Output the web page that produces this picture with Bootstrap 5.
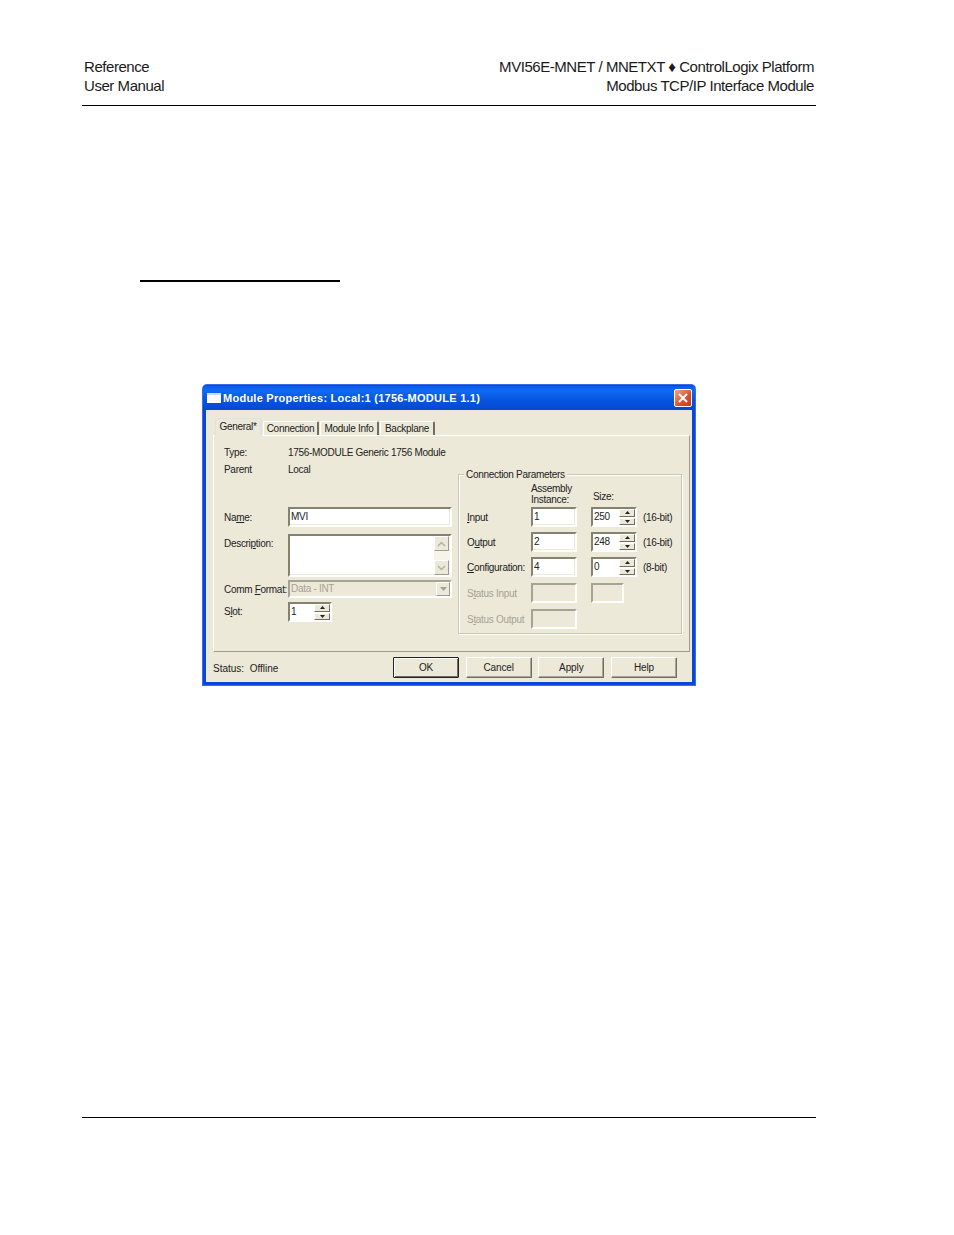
<!DOCTYPE html>
<html lang="en">
<head>
<meta charset="utf-8">
<title>Module Properties</title>
<link href="https://cdn.jsdelivr.net/npm/bootstrap@5.3.0/dist/css/bootstrap.min.css" rel="stylesheet">
<style>
html,body{background:#fff;margin:0}
body{font-family:"Liberation Sans",Arial,sans-serif;color:#222;width:954px;height:1235px;overflow:hidden}
.sheet{padding:57px 138px 0 82px}
.page-head{font-size:15px;letter-spacing:-.45px;line-height:19px;padding:0 2px 10px;border-bottom:1px solid #000;color:#1a1a1a;height:49px}
.short-rule{width:200px;height:2px;background:#000;margin:174px 0 0 58px}
.dlg{width:492px;height:300px;margin:103px 0 0 121px;border:3px solid #0a47d6;border-top-width:1px;border-radius:4px 4px 0 0;background:#ece9d8;font-size:10px;letter-spacing:-.3px;line-height:11px;box-shadow:0 0 0 1px #3a6ee8}
.dlg-title{height:24px;background:linear-gradient(180deg,#0a5ce6 0,#0f6af5 20%,#0656e0 55%,#0548d0 100%);margin:0 -3px;padding:0 3px 0 4px;color:#fff;font-weight:700;font-size:11px;letter-spacing:.26px}
.win-ico{width:14px;height:10px;background:#fff;border-top:2px solid #c9d8f5;margin-right:2px}
.win-close{width:18px;height:18px;background:linear-gradient(135deg,#f0a58c,#d9512c 60%,#c23c18);border:1px solid #fff;border-radius:2px}
.win-close svg{display:block}
.dlg-tabs{margin:8px 0 0 9px;border:0;height:18px;align-items:flex-end;position:relative;z-index:1;flex-wrap:nowrap}
.dlg-tabs .nav-link{font-size:10px;line-height:11px;color:#222;background:#ece9d8;border:0;border-radius:2px 2px 0 0;border-top:1px solid #fff;border-left:1px solid #fff;border-right:2px solid #716f64;padding:1px 0 0;height:14px;text-align:center;margin:0 1px 1px 0}
.dlg-tabs .nav-link.active{height:18px;margin:0 1px 0 0;padding-top:2px;background:#ece9d8;color:#222}
.tab-a{width:47px}.tab-b{width:56px}.tab-c{width:59px}.tab-d{width:55px}
.dlg-panel{margin:-1px 2px 0 7px;height:217px;border:1px solid;border-color:#fff #9d9c8f #9d9c8f #fff;padding:7px 7px 0 10px;gap:6px}
.left-col{width:228px}
.form-line{display:flex;align-items:center}
.lbl{width:64px;flex:none;white-space:nowrap}
.lbl-up{margin-top:-2px}
.h-18{height:18px}.h-17{height:17px}.h-20{height:20px}
.mt-name{margin-top:29px}.mt-desc{margin-top:7px}.mt-comm{margin-top:3px}.mt-slot{margin-top:4px}
.sunk{border:2px solid;border-color:#85836f #fff #fff #85836f;box-shadow:inset -1px -1px 0 #ece9d8;background:#fff;box-sizing:border-box}
.sunk-off{background:#ece9d8;border-color:#a5a392 #fff #fff #a5a392}
.field{flex:1 1 auto;min-width:0;width:100%;height:100%;border:0;outline:0;padding:0 0 1px 1px;background:transparent;font:inherit;letter-spacing:inherit;color:#222;border-radius:0}
.field:disabled{background:transparent;color:#a5a394}
.w-164{width:164px}.w-44{width:44px}.w-33{width:33px}
.h-box{height:43px}
.desc-lbl{padding-top:4px}
.scroll-col{width:16px;background:#f5f4ea;justify-content:space-between}
.arrow-btn{width:15px;height:15px;background:#ece9d8;border:1px solid;border-color:#fff #9d9c8f #9d9c8f #fff;display:flex;align-items:center;justify-content:center}
.drop-btn{align-self:stretch;height:auto}
.spin-col{width:16px;gap:1px;padding:0;flex:none}
.spin-btn{flex:1 1 0;background:#ece9d8;border:1px solid;border-color:#fff #716f64 #716f64 #fff;display:flex;align-items:center;justify-content:center;min-height:0}
.spin-wrap{background:#fff;box-shadow:none}
.off-text{color:#a5a394}
.group{width:224px;height:160px;margin-top:31px;position:relative;border:1px solid #c8c7b6;box-shadow:1px 1px 0 #fff,inset 1px 1px 0 #fff;padding:7px 0 0 8px}
.group-legend{position:absolute;left:5px;top:-6px;background:#ece9d8;padding:0 2px;white-space:nowrap}
.conn-grid{display:grid;grid-template-columns:64px 46px 60px auto;grid-template-rows:20px 20px 20px 20px 21px 21px;row-gap:5px;align-items:center}
.conn-grid .col-spin{margin-left:14px;width:46px}
.unit{margin-left:6px;white-space:nowrap}
.hdr-a{align-self:start;padding-top:1px}
.hdr-s{padding-left:16px;align-self:start;padding-top:9px}
.r-end{align-self:end}
.off-text.r-end{margin-bottom:4px}
.conn-grid .col-spin.w-33{width:33px}
.dlg-foot{height:32px;padding:5px 15px 0 7px}
.status{padding-top:6px;letter-spacing:0}
.foot-btns{gap:6.67px}
.btn.xp-btn{width:66px;height:21px;padding:0;font-size:10px;letter-spacing:-.1px;line-height:11px;color:#222;background:#ece9d8;border:1px solid;border-color:#fff #6f6e62 #6f6e62 #fff;border-radius:1px;box-shadow:inset -1px -1px 0 #a7a698}
.btn.xp-btn.is-default{border:1px solid #222;box-shadow:inset 1px 1px 0 #fff,inset -1px -1px 0 #6f6e62}
.foot-rule{height:1px;background:#000;margin-top:432px}
</style>
</head>
<body>
<div class="sheet">
  <header class="page-head d-flex justify-content-between">
    <div>Reference<br>User Manual</div>
    <div class="text-end">MVI56E-MNET / MNETXT ♦ ControlLogix Platform<br>Modbus TCP/IP Interface Module</div>
  </header>
  <div class="short-rule"></div>

  <div class="dlg">
    <div class="dlg-title d-flex align-items-center">
      <span class="win-ico"></span>
      <span class="flex-grow-1">Module Properties: Local:1 (1756-MODULE 1.1)</span>
      <span class="win-close"><svg width="16" height="16" viewBox="0 0 16 16"><path d="M4 4l8 8M12 4l-8 8" stroke="#fff" stroke-width="2" fill="none"/></svg></span>
    </div>
    <ul class="nav nav-tabs dlg-tabs">
      <li class="nav-item"><a class="nav-link active tab-a" href="#">General*</a></li>
      <li class="nav-item"><a class="nav-link tab-b" href="#">Connection</a></li>
      <li class="nav-item"><a class="nav-link tab-c" href="#">Module Info</a></li>
      <li class="nav-item"><a class="nav-link tab-d" href="#">Backplane</a></li>
    </ul>
    <div class="dlg-panel d-flex">
      <div class="left-col">
        <div class="form-line h-18"><span class="lbl">Type:</span><span>1756-MODULE Generic 1756 Module</span></div>
        <div class="form-line h-17"><span class="lbl">Parent</span><span>Local</span></div>
        <div class="form-line mt-name h-20"><span class="lbl">Na<u>m</u>e:</span><div class="sunk w-164 h-20 d-flex"><input class="field" value="MVI" aria-label="Name"></div></div>
        <div class="form-line mt-desc h-box align-items-start"><span class="lbl desc-lbl">Descri<u>p</u>tion:</span>
          <div class="sunk w-164 h-box d-flex"><div class="flex-grow-1"></div>
            <div class="scroll-col d-flex flex-column">
              <span class="arrow-btn"><svg width="9" height="6" viewBox="0 0 9 6"><path d="M1 5l3.500-3.500L8 5" stroke="#b3b2a3" stroke-width="1.500" fill="none"/></svg></span>
              <span class="arrow-btn"><svg width="9" height="6" viewBox="0 0 9 6"><path d="M1 1l3.500 3.500L8 1" stroke="#b3b2a3" stroke-width="1.500" fill="none"/></svg></span>
            </div>
          </div>
        </div>
        <div class="form-line mt-comm h-18"><span class="lbl">Comm <u>F</u>ormat:</span>
          <div class="sunk sunk-off w-164 h-18 d-flex"><input class="field" value="Data - INT" disabled aria-label="Comm Format">
            <span class="arrow-btn drop-btn"><svg width="7" height="4" viewBox="0 0 7 4"><path d="M0 0h7L3.500 4z" fill="#a5a394"/></svg></span>
          </div>
        </div>
        <div class="form-line mt-slot h-20"><span class="lbl lbl-up">S<u>l</u>ot:</span>
          <div class="sunk spin-wrap w-44 h-20 d-flex"><input class="field" value="1" aria-label="Slot">
            <span class="spin-col d-flex flex-column">
              <span class="spin-btn"><svg width="5" height="3" viewBox="0 0 5 3"><path d="M2.500 0L5 3H0z" fill="#222"/></svg></span>
              <span class="spin-btn"><svg width="5" height="3" viewBox="0 0 5 3"><path d="M0 0h5L2.500 3z" fill="#222"/></svg></span>
            </span>
          </div>
        </div>
      </div>

      <div class="group">
        <span class="group-legend">Connection Parameters</span>
        <div class="conn-grid">
          <span></span><span class="hdr-a">Assembly<br>Instance:</span><span class="hdr-s">Size:</span><span></span>

          <span><u>I</u>nput</span>
          <div class="sunk h-20 d-flex"><input class="field" value="1" aria-label="Input instance"></div>
          <div class="sunk spin-wrap col-spin h-20 d-flex"><input class="field" value="250" aria-label="Input size"><span class="spin-col d-flex flex-column"><span class="spin-btn"><svg width="5" height="3" viewBox="0 0 5 3"><path d="M2.500 0L5 3H0z" fill="#222"/></svg></span><span class="spin-btn"><svg width="5" height="3" viewBox="0 0 5 3"><path d="M0 0h5L2.500 3z" fill="#222"/></svg></span></span></div>
          <span class="unit">(16-bit)</span>

          <span>O<u>u</u>tput</span>
          <div class="sunk h-20 d-flex"><input class="field" value="2" aria-label="Output instance"></div>
          <div class="sunk spin-wrap col-spin h-20 d-flex"><input class="field" value="248" aria-label="Output size"><span class="spin-col d-flex flex-column"><span class="spin-btn"><svg width="5" height="3" viewBox="0 0 5 3"><path d="M2.500 0L5 3H0z" fill="#222"/></svg></span><span class="spin-btn"><svg width="5" height="3" viewBox="0 0 5 3"><path d="M0 0h5L2.500 3z" fill="#222"/></svg></span></span></div>
          <span class="unit">(16-bit)</span>

          <span><u>C</u>onfiguration:</span>
          <div class="sunk h-20 d-flex"><input class="field" value="4" aria-label="Configuration instance"></div>
          <div class="sunk spin-wrap col-spin h-20 d-flex"><input class="field" value="0" aria-label="Configuration size"><span class="spin-col d-flex flex-column"><span class="spin-btn"><svg width="5" height="3" viewBox="0 0 5 3"><path d="M2.500 0L5 3H0z" fill="#222"/></svg></span><span class="spin-btn"><svg width="5" height="3" viewBox="0 0 5 3"><path d="M0 0h5L2.500 3z" fill="#222"/></svg></span></span></div>
          <span class="unit">(8-bit)</span>

          <span class="off-text r-end">S<u>t</u>atus Input</span>
          <div class="sunk sunk-off h-20 r-end"></div>
          <div class="sunk sunk-off col-spin w-33 h-20 r-end"></div>
          <span></span>

          <span class="off-text r-end">S<u>t</u>atus Output</span>
          <div class="sunk sunk-off h-20 r-end"></div>
          <span></span><span></span>
        </div>
      </div>
    </div>
    <div class="dlg-foot d-flex justify-content-between">
      <span class="status">Status:&nbsp; Offline</span>
      <div class="foot-btns d-flex">
        <button type="button" class="btn xp-btn is-default">OK</button>
        <button type="button" class="btn xp-btn">Cancel</button>
        <button type="button" class="btn xp-btn">Apply</button>
        <button type="button" class="btn xp-btn">Help</button>
      </div>
    </div>
  </div>
  <div class="foot-rule"></div>
</div>
<script src="https://cdn.jsdelivr.net/npm/bootstrap@5.3.0/dist/js/bootstrap.bundle.min.js"></script>
</body>
</html>
